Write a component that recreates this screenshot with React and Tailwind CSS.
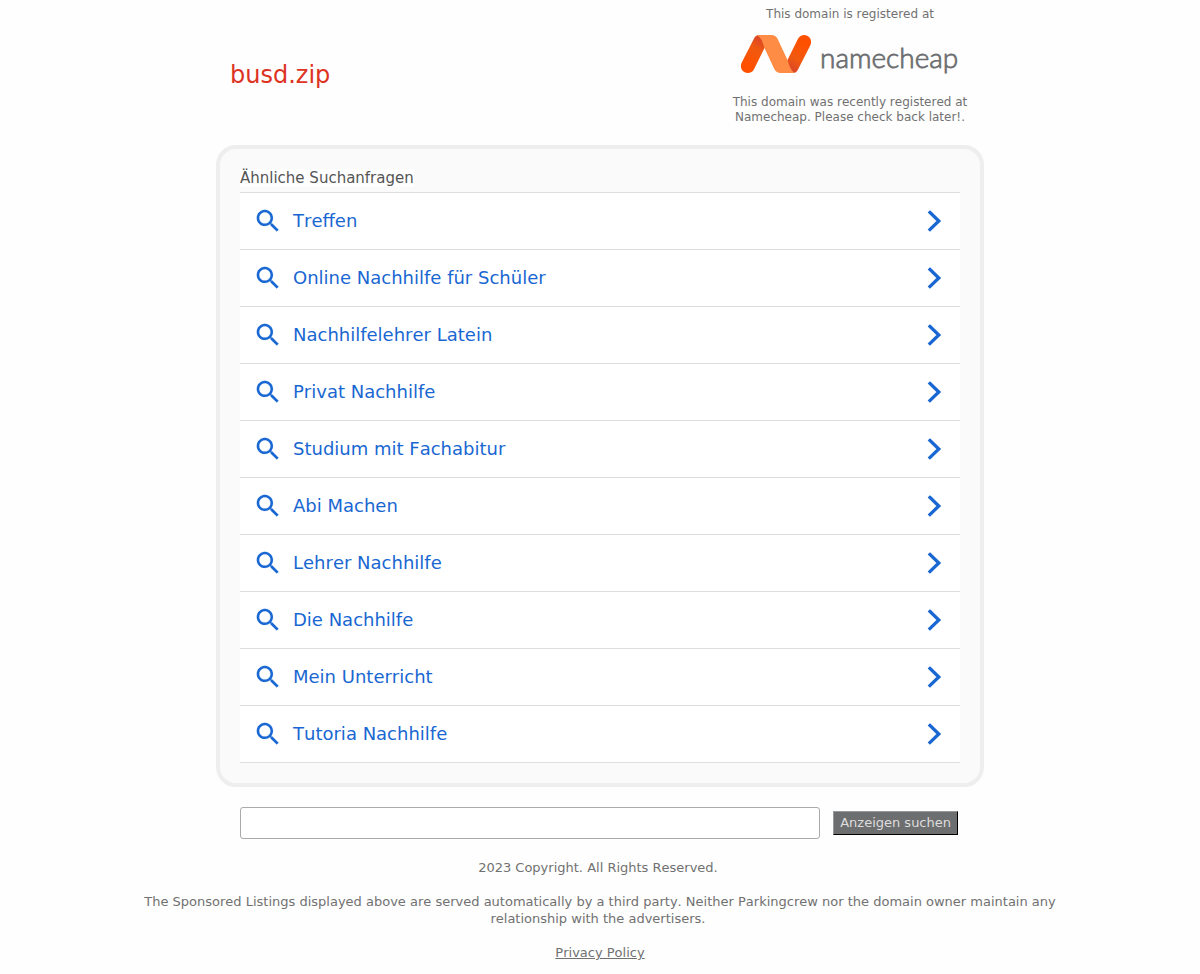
const searches = [
  "Treffen",
  "Online Nachhilfe für Schüler",
  "Nachhilfelehrer Latein",
  "Privat Nachhilfe",
  "Studium mit Fachabitur",
  "Abi Machen",
  "Lehrer Nachhilfe",
  "Die Nachhilfe",
  "Mein Unterricht",
  "Tutoria Nachhilfe",
];

function NamecheapLogo() {
  return (
    <svg className="h-[50px] w-[220px]" viewBox="0 0 220 50" role="img" aria-label="namecheap">
      <defs>
        <linearGradient id="legLeft" x1="0.7" y1="0" x2="0.3" y2="1">
          <stop offset="0" stopColor="#d9432a" />
          <stop offset="0.35" stopColor="#f05a10" />
          <stop offset="0.8" stopColor="#ff5000" />
        </linearGradient>
        <linearGradient id="legRight" x1="0.7" y1="0" x2="0.3" y2="1">
          <stop offset="0.2" stopColor="#ff5000" />
          <stop offset="0.65" stopColor="#f05a10" />
          <stop offset="1" stopColor="#d9432a" />
        </linearGradient>
      </defs>
      <path d="M19 7h6l1 10-12 24.200C12.700 43.700 10.500 45 7.800 45 3.500 45 .2 41.300 1 37c.1-1 .5-2 1-3L14 10.600C15.100 8.300 16.600 7 19 7z" fill="url(#legLeft)" />
      <path d="M53 45h-6l-1-10 12-24.200C59.300 8.300 61.500 7 64.200 7c4.300 0 7.600 3.700 6.800 8-.1 1-.5 2-1 3L58 41.400C56.900 43.700 55.400 45 53 45z" fill="url(#legRight)" />
      <path d="M18.500 7H31.500c2.700 0 4.900 1.400 6.200 4L47.500 32c1.800 5 2.500 9.500 7 12.700-.5.200-1 .3-1.500.3H40.500c-2.700 0-4.900-1.400-6.200-4L24.500 20c-1.800-5-2.500-9.500-7.500-12.700.5-.2 1-.3 1.500-.3z" fill="#ff8c44" />
      <text x="80" y="40" fontSize="28" fontWeight="300" fontFamily="Lato, sans-serif" fill="#6d6e70" stroke="#6d6e70" strokeWidth="0.8">namecheap</text>
    </svg>
  );
}

function SearchIcon() {
  return (
    <svg className="size-[30px] shrink-0" viewBox="0 0 24 24" fill="currentColor" stroke="currentColor" strokeWidth="0.1" aria-hidden="true">
      <path d="M15.500 14h-.79l-.28-.27C15.410 12.590 16 11.110 16 9.500 16 5.910 13.090 3 9.500 3S3 5.910 3 9.500 5.910 16 9.500 16c1.610 0 3.090-.59 4.230-1.570l.27.28v.79l5 4.990L20.490 19l-4.990-5zm-6 0C7.010 14 5 11.990 5 9.500S7.010 5 9.500 5 14 7.010 14 9.500 11.990 14 9.500 14z" />
    </svg>
  );
}

function ChevronIcon() {
  return (
    <svg className="ml-auto size-10 shrink-0" viewBox="0 0 40 40" fill="none" aria-hidden="true">
      <path d="M15 11.500l8.800 8.500L15 28.500" stroke="currentColor" strokeWidth="3.300" strokeLinecap="square" />
    </svg>
  );
}

export default function App() {
  return (
    <div className="min-h-screen bg-[#fefefe] font-['DejaVu_Sans',sans-serif] text-[#717171] [font-kerning:none]">
      <div className="mx-auto max-w-[768px]">
        <header className="flex items-center justify-between px-1">
          <h1 className="pt-[5px] pl-[10px] text-2xl text-[#dd3322]">busd.zip</h1>
          <div className="flex w-[260px] flex-col items-center pt-[7px] pb-5 text-center text-xs leading-[15px]">
            <p>This domain is registered at</p>
            <div className="pt-[6px] pb-[17px]">
              <NamecheapLogo />
            </div>
            <p>This domain was recently registered at Namecheap. Please check back later!.</p>
          </div>
        </header>

        <main>
          <section className="rounded-[20px] border-4 border-[#eeeeee] bg-[#fafafa] p-5">
            <h2 className="mb-[5px] w-fit bg-[#fefefe] text-[15px] leading-[18px] text-[#555555]">Ähnliche Suchanfragen</h2>
            <ul className="border-t border-[#dedede] bg-white">
              {searches.map((label) => (
                <li key={label} className="border-b border-[#dedede]">
                  <a href="#" className="flex h-14 items-center gap-[10px] pr-[5px] pl-[13px] text-lg text-[#1967d2]">
                    <SearchIcon />
                    <span>{label}</span>
                    <ChevronIcon />
                  </a>
                </li>
              ))}
            </ul>
          </section>

          <form className="flex items-center gap-[13px] px-6 py-5" onSubmit={(e) => e.preventDefault()}>
            <input
              type="text"
              aria-label="Anzeigen suchen"
              className="h-8 min-w-0 flex-1 rounded-[3px] border border-[#aaaaaa] bg-white px-2 text-sm"
            />
            <button
              type="submit"
              className="mr-[2px] h-6 border border-t-[#999999] border-r-black border-b-black border-l-[#999999] bg-[#6d6e70] px-[6px] text-[13px] leading-4 text-[#dddddd]"
            >
              Anzeigen suchen
            </button>
          </form>
        </main>
      </div>

      <footer className="mx-auto flex max-w-[960px] flex-col gap-[17px] px-4 pb-3 text-center text-[13px] leading-[17px]">
        <p>2023 Copyright. All Rights Reserved.&nbsp;</p>
        <p>
          The Sponsored Listings displayed above are served automatically by a third party. Neither Parkingcrew nor the
          domain owner maintain any relationship with the advertisers.&nbsp;
        </p>
        <p>
          <a href="#" className="underline">Privacy Policy</a>
        </p>
      </footer>
    </div>
  );
}
